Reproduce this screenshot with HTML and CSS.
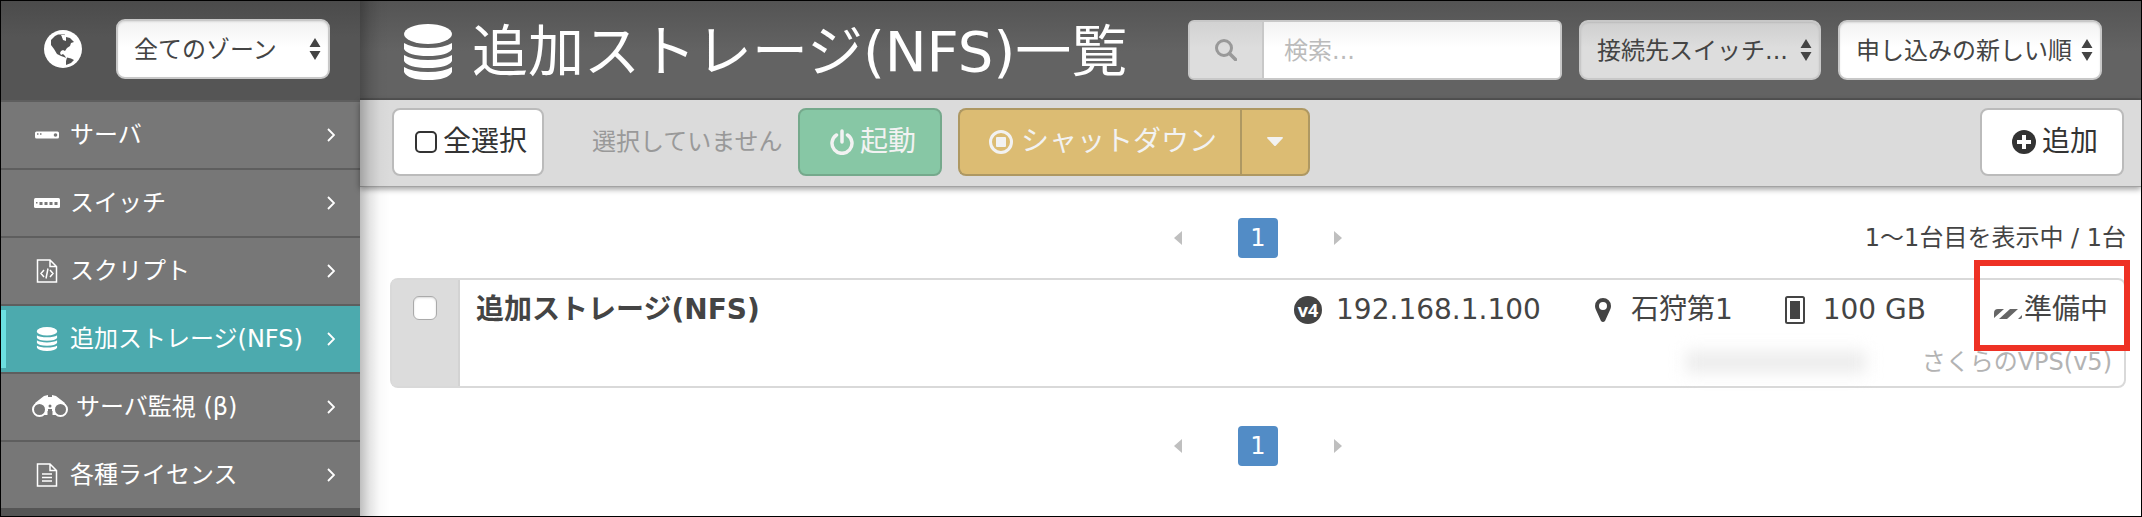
FILE: index.html
```
<!DOCTYPE html>
<html lang="ja">
<head>
  <meta charset="UTF-8" />
  <meta name="viewport" content="width=device-width, initial-scale=1.0"/>
  <title>追加ストレージ(NFS)一覧</title>
  <link rel="stylesheet" href="styles.css">
</head>
<body>
  <!-- shared icons -->
  <svg class="defs" width="0" height="0" aria-hidden="true">
    <symbol id="database" viewBox="0 0 48 56">
      <ellipse cx="24" cy="10" rx="24" ry="10"/>
      <path d="M0 19Q8 24 24 24Q40 24 48 19V25Q44 32 24 32Q4 32 0 25Z"/>
      <path d="M0 31Q8 36 24 36Q40 36 48 31V37Q44 44 24 44Q4 44 0 37Z"/>
      <path d="M0 43Q8 48 24 48Q40 48 48 43V48Q44 56 24 56Q4 56 0 48Z"/>
    </symbol>
    <symbol id="sort" viewBox="0 0 12 22">
      <path d="M6 0L11.500 9H.500ZM6 22L11.500 13H.500Z"/>
    </symbol>
    <symbol id="chevron" viewBox="0 0 8 14">
      <path d="M1 1L7 7L1 13" fill="none" stroke="currentColor" stroke-width="1.800"/>
    </symbol>
    <symbol id="prev" viewBox="0 0 8 14"><path d="M8 0V14L0 7Z"/></symbol>
    <symbol id="next" viewBox="0 0 8 14"><path d="M0 0V14L8 7Z"/></symbol>
  </svg>

  <div class="app">
    <nav class="sidebar">
      <div class="zone">
        <svg class="globe" viewBox="0 0 38 38" aria-hidden="true">
          <circle cx="19" cy="19" r="19" fill="#fff"/>
          <path fill="#525252" d="M7 10L11 6L14 4.500L21 4.500L20 6.500L18 7L19 10L22 11L22 7L26 8L28 10L30 12L27 13L26 16L23 18L21 21L19 20L17 21L16 23L17 25L19 24L21 26L22 28L20 27L17 26L13 24L10 19L7 15Z"/>
          <path fill="#525252" d="M23 27.500L27 28.500L30 30L27 33L22 35L22 31Z"/>
          <path fill="#fff" d="M17 5L21 5L20 9L18 7Z"/>
        </svg>
        <div class="select zone-select">
          <select aria-label="ゾーン"><option>全てのゾーン</option></select>
          <svg class="sort"><use href="#sort"/></svg>
        </div>
      </div>
      <ul class="menu">
        <li><a href="#">
          <svg class="menu-icon" viewBox="0 0 26 26"><rect x="1" y="9.500" width="24" height="7" rx="1.500" fill="#fff"/><circle cx="21.500" cy="13" r="1.800" fill="#777"/><path d="M3 12H4.500M6 12H7.500" stroke="#777" stroke-width="1.500"/></svg>
          サーバ<svg class="chevron"><use href="#chevron"/></svg></a></li>
        <li><a href="#">
          <svg class="menu-icon" viewBox="0 0 26 26"><rect y="8" width="26" height="10" rx="1.500" fill="#fff"/><path d="M5.500 13.500H8.500M10.500 13.500H13.500M15.500 13.500H18.500M20.500 13.500H23.500" stroke="#777" stroke-width="3"/><rect x="2" y="12" width="1.500" height="1.500" fill="#777"/></svg>
          スイッチ<svg class="chevron"><use href="#chevron"/></svg></a></li>
        <li><a href="#">
          <svg class="menu-icon" viewBox="0 0 26 26"><path d="M3.500 2H16L22.500 8.500V24H3.500ZM16 2V8.500H22.500M10 12L7 15.500L10 19M16 12L19 15.500L16 19M14 10.500L12 20.500" fill="none" stroke="#fff" stroke-width="1.500"/></svg>
          スクリプト<svg class="chevron"><use href="#chevron"/></svg></a></li>
        <li class="active"><a href="#">
          <svg class="menu-icon pad" viewBox="0 0 48 56"><use href="#database"/></svg>
          追加ストレージ(NFS)<svg class="chevron"><use href="#chevron"/></svg></a></li>
        <li><a href="#" class="wide">
          <svg class="menu-icon-wide" viewBox="0 0 36 24"><path d="M3 8L12 1L16 0V2H20V0L24 1L33 8L24 20H20V14H16V20H12Z" fill="#fff"/><circle cx="7.500" cy="14.500" r="6.500" fill="#777" stroke="#fff" stroke-width="2"/><circle cx="28.500" cy="14.500" r="6.500" fill="#777" stroke="#fff" stroke-width="2"/><circle cx="18" cy="11" r="1.500" fill="#777"/><path d="M15.500 16H20.500V22H15.500Z" fill="#777"/></svg>
          サーバ監視 (β)<svg class="chevron"><use href="#chevron"/></svg></a></li>
        <li><a href="#">
          <svg class="menu-icon" viewBox="0 0 26 26"><path d="M3.500 2H16L22.500 8.500V24H3.500ZM16 2V8.500H22.500M8 12H18M8 15.500H18M8 19H18" fill="none" stroke="#fff" stroke-width="1.500"/></svg>
          各種ライセンス<svg class="chevron"><use href="#chevron"/></svg></a></li>
      </ul>
    </nav>

    <main class="main">
      <header class="header">
        <div class="title">
          <svg class="title-icon"><use href="#database"/></svg>
          <h1>追加ストレージ(NFS)一覧</h1>
        </div>
        <div class="filters">
          <div class="search">
            <label for="q"><svg width="22" height="22" viewBox="0 0 22 22"><circle cx="9" cy="9" r="7.500" fill="none" stroke="#999" stroke-width="3"/><path d="M14.500 14.500L20.500 20.500" stroke="#999" stroke-width="3.500" stroke-linecap="round"/></svg></label>
            <input type="text" id="q" placeholder="検索..." aria-label="検索">
          </div>
          <div class="select switch-select">
            <select aria-label="接続先スイッチ"><option>接続先スイッチ...</option></select>
            <svg class="sort"><use href="#sort"/></svg>
          </div>
          <div class="select order-select">
            <select aria-label="並び順"><option>申し込みの新しい順</option></select>
            <svg class="sort"><use href="#sort"/></svg>
          </div>
        </div>
      </header>

      <div class="toolbar">
        <label class="btn btn-check"><input type="checkbox">全選択</label>
        <span class="selected-none">選択していません</span>
        <button type="button" class="btn btn-start" disabled>
          <svg width="24" height="26" viewBox="0 0 24 26"><path d="M6.500 6A10 10 0 1 0 17.500 6M12 2V13" fill="none" stroke="currentColor" stroke-width="3.500" stroke-linecap="round"/></svg>起動
        </button>
        <div class="btn-group">
          <button type="button" class="btn btn-stop" disabled>
            <svg width="24" height="24" viewBox="0 0 24 24"><circle cx="12" cy="12" r="10.500" fill="none" stroke="currentColor" stroke-width="3"/><rect x="7" y="7" width="10" height="10" rx="1"/></svg>シャットダウン
          </button>
          <button type="button" class="btn btn-caret" aria-label="その他" disabled>
            <svg width="16" height="10" viewBox="0 0 16 10"><path d="M0 1Q0 0 1 0H15Q16 0 16 1L8.500 9H7.500Z"/></svg>
          </button>
        </div>
        <button type="button" class="btn btn-add">
          <svg width="24" height="24" viewBox="0 0 24 24"><circle cx="12" cy="12" r="12"/><path d="M12 5V19M5 12H19" stroke="#fff" stroke-width="4"/></svg>追加
        </button>
      </div>

      <div class="content">
        <div class="pager">
          <div class="pages">
            <a href="#" aria-label="前へ"><svg width="8" height="14"><use href="#prev"/></svg></a>
            <a href="#" class="current">1</a>
            <a href="#" aria-label="次へ"><svg width="8" height="14"><use href="#next"/></svg></a>
          </div>
          <span class="count">1〜1台目を表示中 / 1台</span>
        </div>

        <div class="card">
          <div class="card-check"><input type="checkbox" aria-label="追加ストレージ(NFS)"></div>
          <div class="card-body">
            <div class="card-row">
              <h2>追加ストレージ(NFS)</h2>
              <span class="spec"><span class="v4">v4</span>192.168.1.100</span>
              <span class="spec"><svg class="spec-icon" viewBox="0 0 28 28"><path fill-rule="evenodd" d="M14 2A8 8 0 0 0 6 10Q6 12 7 14L12 25Q14 27 16 25L21 14Q22 12 22 10A8 8 0 0 0 14 2ZM14 6A4 4 0 1 1 14 14A4 4 0 1 1 14 6Z"/></svg>石狩第1</span>
              <span class="spec"><svg class="spec-icon" viewBox="0 0 28 28"><rect x="5" y="1" width="18" height="26" rx="1.500" fill="none" stroke="currentColor" stroke-width="2"/><rect x="9" y="5" width="10" height="18"/></svg>100 GB</span>
              <span class="status"><svg class="stripes" viewBox="0 0 28 10"><path d="M4 0H10L0 9V4Q0 0 4 0ZM16 0H24L13 10H5ZM28 6V8Q28 10 26 10H24Z" fill="#666"/></svg>準備中</span>
            </div>
            <div class="card-row sub">
              <span class="masked"></span>
              <span class="tag">さくらのVPS(v5)</span>
            </div>
          </div>
          <div class="highlight"></div>
        </div>

        <div class="pager">
          <div class="pages">
            <a href="#" aria-label="前へ"><svg width="8" height="14"><use href="#prev"/></svg></a>
            <a href="#" class="current">1</a>
            <a href="#" aria-label="次へ"><svg width="8" height="14"><use href="#next"/></svg></a>
          </div>
        </div>
      </div>
    </main>
  </div>
</body>
</html>
```

FILE: styles.css
```
* {
  box-sizing: border-box;
}

body {
  margin: 0;
  font-family: "DejaVu Sans", "Noto Sans CJK JP", sans-serif;
  font-size: 24px;
  line-height: 36px;
  color: #444;
  background: #fff;
}

svg {
  fill: currentColor;
  flex: none;
}

.defs {
  position: absolute;
}

a {
  color: inherit;
  text-decoration: none;
}

.app {
  display: flex;
  min-height: 100vh;
  border: 1px solid #000;
  position: relative;
}

/* Sidebar */
.sidebar {
  width: 359px;
  flex: none;
  background: #555;
  color: #fff;
}

.zone {
  display: flex;
  align-items: center;
  gap: 34px;
  height: 101px;
  padding: 0 30px 4px 43px;
  border-bottom: 2px solid #5e5e5e;
  background: linear-gradient(#4b4b4b, #555 36px);
}

.globe {
  width: 38px;
  height: 38px;
}

.menu {
  list-style: none;
  margin: 0;
  padding: 0;
}

.menu li {
  border-bottom: 2px solid #5e5e5e;
  background: #777;
}

.menu li:last-child {
  border-bottom: none;
}

.menu a {
  display: flex;
  align-items: center;
  gap: 10px;
  height: 66px;
  padding: 0 25px 0 33px;
}

.menu a.wide {
  gap: 8px;
  padding-left: 31px;
}

.menu .active {
  background: #4caaae;
  position: relative;
}

.menu .active::before {
  content: "";
  position: absolute;
  left: 0;
  top: 4px;
  bottom: 4px;
  width: 5px;
  background: #6cdfe0;
}

.menu-icon {
  width: 26px;
  height: 26px;
}

.menu-icon.pad {
  padding: 1px 0;
}

.menu-icon-wide {
  width: 36px;
  height: 24px;
}

.chevron {
  width: 8px;
  height: 14px;
  margin-left: auto;
}

/* Form controls */
.select {
  position: relative;
  height: 60px;
}

.select select {
  appearance: none;
  width: 100%;
  height: 60px;
  padding: 2px 16px 0;
  border: 2px solid #c8c8c8;
  border-radius: 9px;
  background: linear-gradient(#f2f2f2, #fff 26px);
  box-shadow: inset 0 1px 2px rgba(0,0,0,0.1);
  font: inherit;
  color: #444;
}

.sort {
  position: absolute;
  right: 9px;
  top: 19px;
  width: 12px;
  height: 22px;
  color: #444;
  pointer-events: none;
}

.zone-select {
  flex: 1;
}

.switch-select {
  width: 242px;
}

.order-select {
  width: 264px;
}

.switch-select select {
  background: linear-gradient(#cfcfcf, #ddd 26px);
}

.search {
  display: flex;
  width: 374px;
  height: 60px;
  border: 2px solid #c8c8c8;
  border-radius: 6px;
  background: #ddd;
  overflow: hidden;
}

.search label {
  width: 74px;
  display: flex;
  align-items: center;
  justify-content: center;
  border-right: 2px solid #c8c8c8;
  background: linear-gradient(#d2d2d2, #ddd 26px);
}

.search input {
  flex: 1;
  min-width: 0;
  padding: 2px 20px 0;
  border: none;
  background: linear-gradient(#f2f2f2, #fff 26px);
  font: inherit;
  color: #444;
}

.search input::placeholder {
  color: #bbb;
}

/* Main */
.main {
  flex: 1;
  min-width: 0;
  position: relative;
}

/* shadow dropped by the sidebar */
.main::before {
  content: "";
  position: absolute;
  left: 0;
  top: 0;
  bottom: 0;
  width: 30px;
  z-index: 1;
  background: linear-gradient(to right, rgba(0,0,0,0.25), rgba(0,0,0,0.1) 10px, rgba(0,0,0,0.02) 20px, transparent);
  pointer-events: none;
}

.header {
  display: flex;
  align-items: center;
  height: 99px;
  padding: 1px 39px 0 44px;
  border-bottom: 2px solid #555;
  background: linear-gradient(#545454, #636363 50px);
  color: #fff;
}

.title {
  display: flex;
  align-items: center;
  gap: 20px;
  padding-top: 4px;
}

.title-icon {
  width: 48px;
  height: 56px;
}

h1 {
  margin: 0;
  font-size: 56px;
  line-height: 80px;
  font-weight: normal;
  white-space: nowrap;
}

.filters {
  display: flex;
  gap: 17px;
  margin-left: auto;
}

.toolbar {
  display: flex;
  align-items: center;
  height: 87px;
  padding: 0 17px 2px 32px;
  border-bottom: 1px solid #a3a3a3;
  background: #dbdbdb;
  box-shadow: 0 2px 6px rgba(0,0,0,0.4);
}

.btn {
  display: flex;
  align-items: center;
  justify-content: center;
  gap: 6px;
  height: 68px;
  padding: 0 0 0 6px;
  border: 2px solid #bbb;
  border-radius: 8px;
  background: #fff;
  font: inherit;
  font-size: 28px;
  color: #333;
  white-space: nowrap;
}

.btn-check {
  width: 152px;
}

.btn-check input {
  appearance: none;
  width: 22px;
  height: 22px;
  margin: 0;
  border: 2px solid #333;
  border-radius: 5px;
}

.selected-none {
  width: 192px;
  margin: 0 14px 0 48px;
  color: #999;
  white-space: nowrap;
}

.btn-start {
  width: 144px;
  background: #87c7a5;
  border-color: #75a98c;
  color: #f2f2f2;
}

.btn-group {
  display: flex;
  margin-left: 16px;
}

.btn-stop,
.btn-caret {
  background: #dcbc73;
  border-color: #ae9862;
  color: #f2f2f2;
}

.btn-stop {
  width: 282px;
  gap: 8px;
  border-radius: 8px 0 0 8px;
  border-right: none;
}

.btn-caret {
  width: 70px;
  padding: 0;
  border-radius: 0 8px 8px 0;
}

.btn-add {
  width: 144px;
  margin-left: auto;
}

.content {
  padding: 31px 15px 31px 30px;
}

.pager {
  display: grid;
  grid-template-columns: 1fr auto 1fr;
  align-items: center;
}

.pages {
  grid-column: 2;
  display: flex;
  align-items: center;
  gap: 56px;
  color: #bfbfbf;
}

.pages a {
  display: flex;
}

.pages .current {
  width: 40px;
  height: 40px;
  align-items: center;
  justify-content: center;
  border-radius: 4px;
  background: #528cc6;
  color: #fff;
}

.count {
  text-align: right;
}

.card {
  position: relative;
  display: flex;
  height: 110px;
  margin: 20px 0 38px;
  border: 2px solid #d9d9d9;
  border-radius: 8px;
}

.card-check {
  width: 68px;
  flex: none;
  display: flex;
  justify-content: center;
  padding-top: 16px;
  border-right: 2px solid #d3d3d3;
  background: #dcdcdc;
}

.card-check input {
  appearance: none;
  width: 24px;
  height: 24px;
  margin: 0;
  border: 1px solid #aaa;
  border-radius: 6px;
  background: #fff;
  box-shadow: inset 0 1px 2px rgba(0,0,0,0.15);
}

.card-body {
  flex: 1;
  padding-top: 8px;
}

.card-row {
  display: flex;
  align-items: center;
  gap: 48px;
  height: 44px;
  padding: 0 16px;
  font-size: 28px;
  white-space: nowrap;
}

h2 {
  margin: 0 auto 0 0;
  font-size: 28px;
}

.spec {
  display: flex;
  align-items: center;
  gap: 14px;
}

.spec-icon {
  width: 28px;
  height: 28px;
}

.v4 {
  width: 28px;
  height: 28px;
  border-radius: 50%;
  background: #444;
  color: #fff;
  font-family: "Open Sans", sans-serif;
  font-size: 18px;
  font-weight: bold;
  line-height: 28px;
  text-align: center;
}

.status {
  display: flex;
  align-items: center;
  gap: 2px;
  margin-left: 20px;
}

.stripes {
  width: 28px;
  height: 10px;
  margin-top: 8px;
}

.card-row.sub {
  gap: 56px;
  height: 60px;
  padding: 0 12px;
  justify-content: flex-end;
  font-size: 24px;
  color: #b3b3b3;
}

.masked {
  width: 180px;
  height: 22px;
  background: #ececec;
  filter: blur(8px);
}

.highlight {
  position: absolute;
  top: -20px;
  right: -6px;
  width: 156px;
  height: 91px;
  border: 6px solid #ee3124;
  pointer-events: none;
}
```
